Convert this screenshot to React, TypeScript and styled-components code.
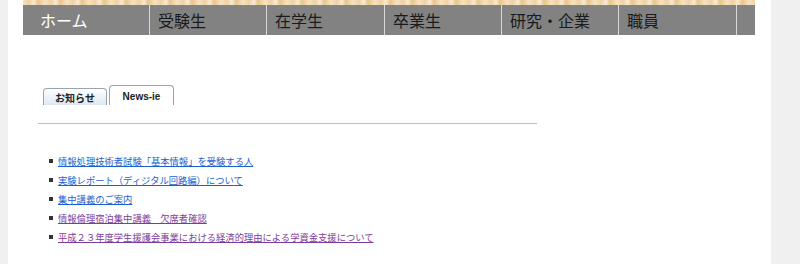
import React from 'react';
import styled, { createGlobalStyle } from 'styled-components';

const GlobalStyle = createGlobalStyle`
  html, body {
    margin: 0;
    padding: 0;
    background: #f0f0f0;
  }
  body {
    font-family: "Liberation Sans", "Noto Sans CJK JP", sans-serif;
  }
`;

const Page = styled.div`
  width: 763px;
  height: 264px;
  margin-left: 8px;
  background: #ffffff;
  padding-left: 15px;
  box-sizing: border-box;
  overflow: hidden;
`;

const Banner = styled.div`
  width: 732px;
  height: 5px;
  background: repeating-linear-gradient(
    90deg,
    #f6e2c0 0px,
    #efd2a4 6px,
    #f8ead2 11px,
    #e9c48e 15px,
    #f6e2c0 22px
  );
`;

const Nav = styled.div`
  width: 732px;
  height: 30px;
  display: flex;
  background: #828282;
`;

const NavItem = styled.div<{ $w: number; $home?: boolean }>`
  width: ${(p) => p.$w}px;
  flex: none;
  box-sizing: border-box;
  border-right: 1px solid #d8d8d8;
  display: flex;
  align-items: center;
  padding-left: ${(p) => (p.$home ? 17 : 8)}px;
  font-size: 16px;
  color: ${(p) => (p.$home ? '#ffffff' : '#1a1a1a')};
  &:last-child {
    border-right: none;
  }
`;

const Content = styled.div`
  padding: 50px 0 0 15px;
  width: 499px;
`;

const Tabs = styled.div`
  display: flex;
  align-items: flex-end;
  gap: 2px;
  padding-left: 5px;
  height: 20px;
`;

const Tab = styled.div<{ $active?: boolean }>`
  box-sizing: border-box;
  width: ${(p) => (p.$active ? 65 : 64)}px;
  height: ${(p) => (p.$active ? 20 : 17)}px;
  border: 1px solid #9aa4ae;
  border-bottom: none;
  border-radius: 4px 4px 0 0;
  background: ${(p) =>
    p.$active ? '#ffffff' : 'linear-gradient(180deg, #ffffff 0%, #dce8f2 100%)'};
  display: flex;
  align-items: center;
  justify-content: center;
  font-size: 10px;
  font-weight: bold;
  color: #222;
  padding-top: ${(p) => (p.$active ? 2 : 0)}px;
`;

const Rule = styled.div`
  margin-top: 18px;
  height: 1px;
  border-top: 1px solid #b8c0c8;
`;

const NewsList = styled.ul`
  list-style: none;
  margin: 29px 0 0 0;
  padding: 0 0 0 11px;
  display: flex;
  flex-direction: column;
  gap: 5px;
`;

const NewsItem = styled.li`
  display: flex;
  align-items: center;
  gap: 5px;
  height: 14px;
  font-size: 9.3px;
  &::before {
    content: '';
    width: 4px;
    height: 4px;
    background: #333;
  }
`;

const NewsLink = styled.a<{ $visited?: boolean }>`
  color: ${(p) => (p.$visited ? '#7c3c9c' : '#1b5fd0')};
  text-decoration: underline;
`;

const navItems = [
  { label: 'ホーム', w: 127, home: true },
  { label: '受験生', w: 117 },
  { label: '在学生', w: 118 },
  { label: '卒業生', w: 117 },
  { label: '研究・企業', w: 117 },
  { label: '職員', w: 118 },
  { label: '', w: 18 },
];

const news = [
  { text: '情報処理技術者試験「基本情報」を受験する人' },
  { text: '実験レポート（ディジタル回路編）について' },
  { text: '集中講義のご案内' },
  { text: '情報倫理宿泊集中講義　欠席者確認', visited: true },
  { text: '平成２３年度学生援護会事業における経済的理由による学資金支援について', visited: true },
];

const App = () => {
  return (
    <>
      <GlobalStyle />
      <Page>
        <Banner />
        <Nav>
          {navItems.map((n, i) => (
            <NavItem key={i} $w={n.w} $home={n.home}>
              {n.label}
            </NavItem>
          ))}
        </Nav>
        <Content>
          <Tabs>
            <Tab>お知らせ</Tab>
            <Tab $active>News-ie</Tab>
          </Tabs>
          <Rule />
          <NewsList>
            {news.map((n, i) => (
              <NewsItem key={i}>
                <NewsLink href="#" $visited={n.visited}>
                  {n.text}
                </NewsLink>
              </NewsItem>
            ))}
          </NewsList>
        </Content>
      </Page>
    </>
  );
};

export default App;
